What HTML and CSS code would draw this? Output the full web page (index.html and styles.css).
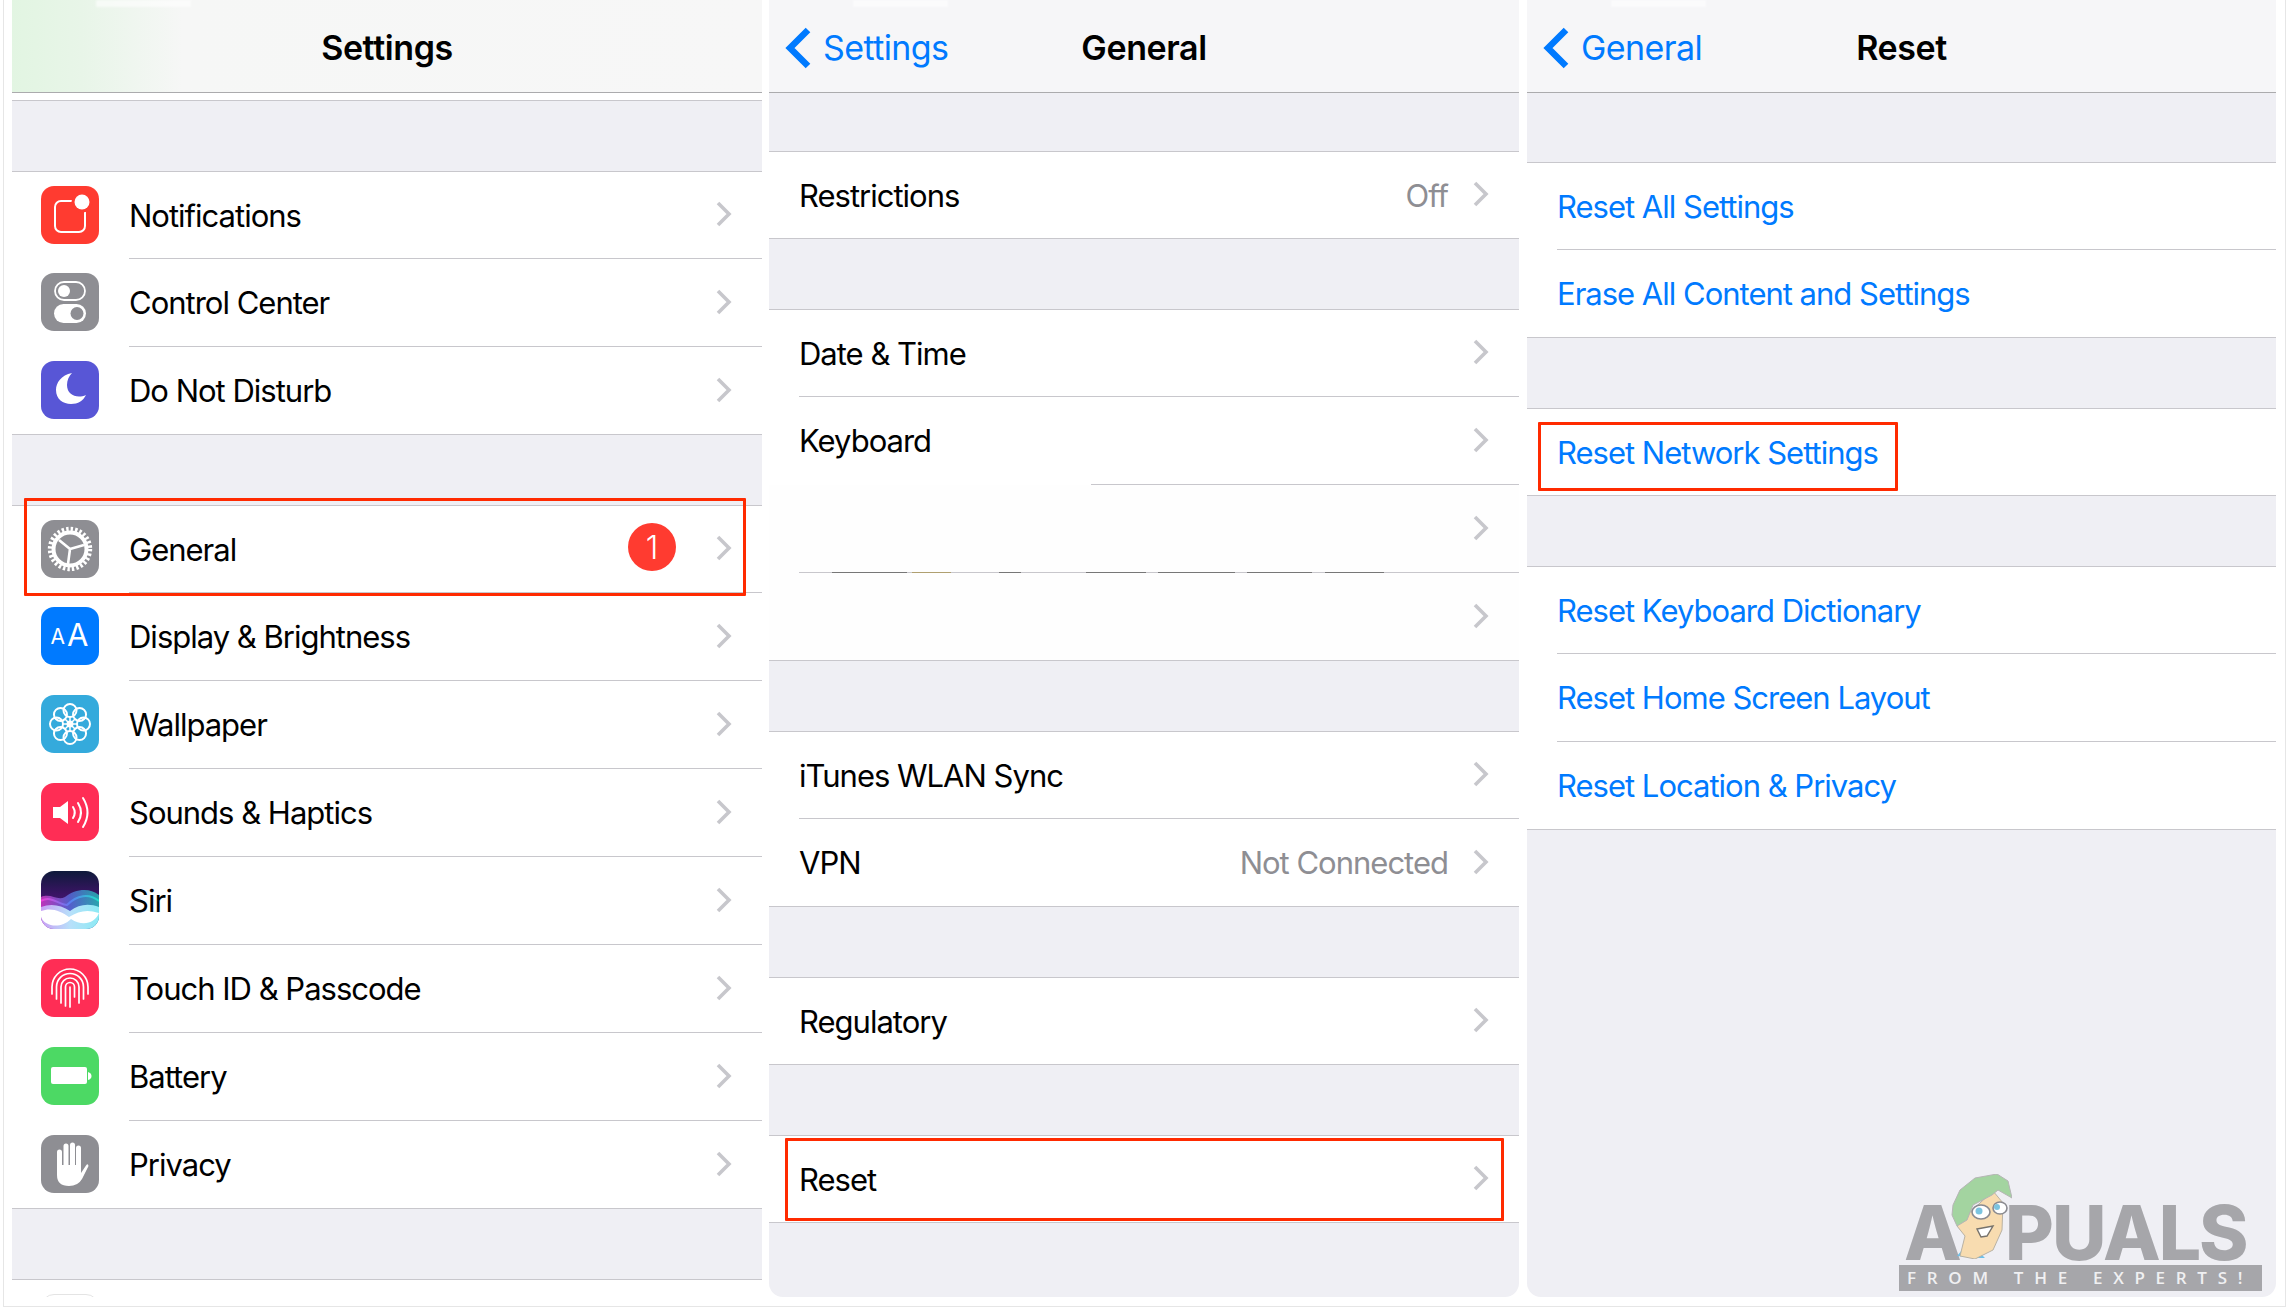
FILE: index.html
```html
<!DOCTYPE html>
<html lang="en">
<head>
    <meta charset="UTF-8">
    <title>iOS Reset Network Settings</title>
    <link rel="stylesheet" href="styles.css">
</head>
<body>
    <div class="frame">

        <!-- Settings -->
        <section class="panel">
            <header class="navbar navbar-green">
                <div class="nav-left"></div>
                <h1 class="nav-title">Settings</h1>
                <div class="nav-right"></div>
            </header>
            <div class="strip"></div>
            <div class="gap"></div>
            <div class="group">
                <div class="row">
                    <svg class="icon" viewBox="0 0 58 58"><rect width="58" height="58" fill="#ff3b30"/><rect x="14" y="15" width="30" height="31" rx="6" fill="none" stroke="#fff" stroke-width="2"/><circle cx="41" cy="16" r="10.5" fill="#ff3b30"/><circle cx="41" cy="16" r="7.5" fill="#fff"/></svg>
                    <div class="row-body"><span class="label">Notifications</span><svg class="chev" viewBox="0 0 16 26"><path d="M2 2l11 11L2 24"/></svg></div>
                </div>
                <div class="row">
                    <svg class="icon" viewBox="0 0 58 58"><rect width="58" height="58" fill="#8e8e93"/><rect x="14" y="9" width="30" height="18" rx="9" fill="none" stroke="#fff" stroke-width="1.8"/><circle cx="23" cy="18" r="6" fill="#fff"/><rect x="13" y="31" width="32" height="19" rx="9.5" fill="#fff"/><circle cx="36" cy="40.5" r="6.5" fill="#8e8e93"/></svg>
                    <div class="row-body"><span class="label">Control Center</span><svg class="chev" viewBox="0 0 16 26"><path d="M2 2l11 11L2 24"/></svg></div>
                </div>
                <div class="row">
                    <svg class="icon" viewBox="0 0 58 58"><rect width="58" height="58" fill="#5856d6"/><path d="M31 12C20 14 15 22 15 29c0 9 7 14 15 14 7 0 12-3 15-9-9 4-19 0-19-10 0-5 2-9 5-12z" fill="#fff"/></svg>
                    <div class="row-body"><span class="label">Do Not Disturb</span><svg class="chev" viewBox="0 0 16 26"><path d="M2 2l11 11L2 24"/></svg></div>
                </div>
            </div>
            <div class="gap"></div>
            <div class="group">
                <div class="row">
                    <svg class="icon" viewBox="0 0 58 58"><rect width="58" height="58" fill="#8e8e93"/><circle cx="29" cy="29" r="20" fill="none" stroke="#fff" stroke-width="4.4" stroke-dasharray="2.4 2.09"/><circle cx="29" cy="29" r="16.5" fill="none" stroke="#fff" stroke-width="4"/><path d="M29 29L18 20M29 29L43 25M29 29L27 44" stroke="#fff" stroke-width="2.6" fill="none"/></svg>
                    <div class="row-body"><span class="label">General</span><span class="badge">1</span><svg class="chev" viewBox="0 0 16 26"><path d="M2 2l11 11L2 24"/></svg></div>
                    <div class="mark mark-general"></div>
                </div>
                <div class="row">
                    <svg class="icon" viewBox="0 0 58 58"><rect width="58" height="58" fill="#007aff"/><text class="icon-aa" x="9.500" y="37" font-size="21">A</text><text class="icon-aa" x="26" y="39" font-size="31">A</text></svg>
                    <div class="row-body"><span class="label">Display &amp; Brightness</span><svg class="chev" viewBox="0 0 16 26"><path d="M2 2l11 11L2 24"/></svg></div>
                </div>
                <div class="row">
                    <svg class="icon" viewBox="0 0 58 58"><rect width="58" height="58" fill="#34aadc"/><g fill="none" stroke="#fff" stroke-width="2"><circle cx="29" cy="15.500" r="6.500"/><circle cx="29" cy="15.500" r="6.500" transform="rotate(45 29 29)"/><circle cx="29" cy="15.500" r="6.500" transform="rotate(90 29 29)"/><circle cx="29" cy="15.500" r="6.500" transform="rotate(135 29 29)"/><circle cx="29" cy="15.500" r="6.500" transform="rotate(180 29 29)"/><circle cx="29" cy="15.500" r="6.500" transform="rotate(225 29 29)"/><circle cx="29" cy="15.500" r="6.500" transform="rotate(270 29 29)"/><circle cx="29" cy="15.500" r="6.500" transform="rotate(315 29 29)"/><path d="M29 22V36M22 29H36M24 24L34 34M34 24L24 34" stroke-width="1.500"/></g><circle cx="29" cy="29" r="3.500" fill="#fff"/></svg>
                    <div class="row-body"><span class="label">Wallpaper</span><svg class="chev" viewBox="0 0 16 26"><path d="M2 2l11 11L2 24"/></svg></div>
                </div>
                <div class="row">
                    <svg class="icon" viewBox="0 0 58 58"><rect width="58" height="58" fill="#ff2d55"/><path d="M12 24h7l8-6v23l-8-6h-7z" fill="#fff"/><path d="M32 24q3.500 5.500 0 11M37 20q6 9.500 0 19M42 15q9 14.500 0 29" fill="none" stroke="#fff" stroke-width="2" stroke-linecap="round"/></svg>
                    <div class="row-body"><span class="label">Sounds &amp; Haptics</span><svg class="chev" viewBox="0 0 16 26"><path d="M2 2l11 11L2 24"/></svg></div>
                </div>
                <div class="row">
                    <svg class="icon" viewBox="0 0 58 58">
                        <defs>
                            <linearGradient id="siriBg" x1="0" y1="0" x2="0" y2="1"><stop offset="0" stop-color="#0e1a3a"/><stop offset=".4" stop-color="#3a1464"/><stop offset="1" stop-color="#5a2a9a"/></linearGradient>
                            <linearGradient id="siriWave" x1="0" y1="0" x2="1" y2="0"><stop offset="0" stop-color="#f040d8"/><stop offset=".5" stop-color="#5a7cf0"/><stop offset="1" stop-color="#20e0c8"/></linearGradient>
                            <linearGradient id="siriLow" x1="0" y1="0" x2="1" y2="0"><stop offset="0" stop-color="#c8a0f4"/><stop offset=".5" stop-color="#b8e0fa"/><stop offset="1" stop-color="#8ceaf4"/></linearGradient>
                        </defs>
                        <rect width="58" height="58" fill="url(#siriBg)"/>
                        <path d="M0 26C10 22 16 30 24 26 34 18 48 16 58 24V58H0z" fill="url(#siriWave)" opacity=".7"/>
                        <path d="M0 30C10 24 18 34 26 34 36 24 48 22 58 30" fill="none" stroke="url(#siriWave)" stroke-width="2"/>
                        <path d="M0 36C10 32 20 34 29 40 38 33 48 32 58 36V58H0z" fill="url(#siriLow)"/>
                        <path d="M0 40C10 36 20 40 28 46 38 40 46 38 58 42 54 52 42 56 30 48 20 58 4 56 0 46z" fill="#fff"/>
                    </svg>
                    <div class="row-body"><span class="label">Siri</span><svg class="chev" viewBox="0 0 16 26"><path d="M2 2l11 11L2 24"/></svg></div>
                </div>
                <div class="row">
                    <svg class="icon" viewBox="0 0 58 58"><rect width="58" height="58" fill="#ff2d55"/><path d="M11 35V28A18 18 0 0 1 47 28V35M15.500 40V28A13.500 13.500 0 0 1 42.500 28V40M20 44V28A9 9 0 0 1 38 28V44M24.500 47V28A4.500 4.500 0 0 1 33.500 28V38M29 28V48" fill="none" stroke="#fff" stroke-width="1.700" stroke-linecap="round"/></svg>
                    <div class="row-body"><span class="label">Touch ID &amp; Passcode</span><svg class="chev" viewBox="0 0 16 26"><path d="M2 2l11 11L2 24"/></svg></div>
                </div>
                <div class="row">
                    <svg class="icon" viewBox="0 0 58 58"><rect width="58" height="58" fill="#4cd964"/><rect x="10" y="20" width="36" height="17" rx="2" fill="#fff"/><path d="M47 25q3.500 1 3.500 4t-3.500 4z" fill="#fff"/></svg>
                    <div class="row-body"><span class="label">Battery</span><svg class="chev" viewBox="0 0 16 26"><path d="M2 2l11 11L2 24"/></svg></div>
                </div>
                <div class="row">
                    <svg class="icon" viewBox="0 0 58 58"><rect width="58" height="58" fill="#8e8e93"/><path d="M18.500 17V36M25 11V32M31.500 10V32M37.500 13V34" stroke="#fff" stroke-width="5" stroke-linecap="round" fill="none"/><path d="M16 30H40V38L45 30.500Q47 28 47.500 31L41 44Q37 51 28 51 16 51 16 40z" fill="#fff"/></svg>
                    <div class="row-body"><span class="label">Privacy</span><svg class="chev" viewBox="0 0 16 26"><path d="M2 2l11 11L2 24"/></svg></div>
                </div>
            </div>
            <div class="gap"></div>
            <div class="group group-open">
                <div class="row">
                    <div class="icon icon-clipped"></div>
                </div>
            </div>
        </section>

        <!-- General -->
        <section class="panel panel-gray">
            <header class="navbar">
                <a class="back"><svg class="back-chev" viewBox="0 0 26 42"><path d="M23 3L5 21l18 18"/></svg>Settings</a>
                <h1 class="nav-title">General</h1>
                <div class="nav-right"></div>
            </header>
            <div class="gap gap-first"></div>
            <div class="group">
                <div class="row row-plain">
                    <div class="row-body"><span class="label">Restrictions</span><span class="value">Off</span><svg class="chev" viewBox="0 0 16 26"><path d="M2 2l11 11L2 24"/></svg></div>
                </div>
            </div>
            <div class="gap"></div>
            <div class="group">
                <div class="row row-plain">
                    <div class="row-body"><span class="label">Date &amp; Time</span><svg class="chev" viewBox="0 0 16 26"><path d="M2 2l11 11L2 24"/></svg></div>
                </div>
                <div class="row row-plain">
                    <div class="row-body"><span class="label">Keyboard</span><svg class="chev" viewBox="0 0 16 26"><path d="M2 2l11 11L2 24"/></svg></div>
                    <div class="line-patch"></div>
                </div>
                <div class="row row-plain row-blurred">
                    <div class="row-body"><span class="label"></span><svg class="chev" viewBox="0 0 16 26"><path d="M2 2l11 11L2 24"/></svg></div>
                    <div class="line-dashes"></div>
                </div>
                <div class="row row-plain row-blurred">
                    <div class="row-body"><span class="label"></span><svg class="chev" viewBox="0 0 16 26"><path d="M2 2l11 11L2 24"/></svg></div>
                </div>
            </div>
            <div class="gap"></div>
            <div class="group">
                <div class="row row-plain">
                    <div class="row-body"><span class="label">iTunes WLAN Sync</span><svg class="chev" viewBox="0 0 16 26"><path d="M2 2l11 11L2 24"/></svg></div>
                </div>
                <div class="row row-plain">
                    <div class="row-body"><span class="label">VPN</span><span class="value">Not Connected</span><svg class="chev" viewBox="0 0 16 26"><path d="M2 2l11 11L2 24"/></svg></div>
                </div>
            </div>
            <div class="gap"></div>
            <div class="group">
                <div class="row row-plain">
                    <div class="row-body"><span class="label">Regulatory</span><svg class="chev" viewBox="0 0 16 26"><path d="M2 2l11 11L2 24"/></svg></div>
                </div>
            </div>
            <div class="gap"></div>
            <div class="group">
                <div class="row row-plain">
                    <div class="row-body"><span class="label">Reset</span><svg class="chev" viewBox="0 0 16 26"><path d="M2 2l11 11L2 24"/></svg></div>
                    <div class="mark mark-reset"></div>
                </div>
            </div>
        </section>

        <!-- Reset -->
        <section class="panel panel-gray">
            <header class="navbar">
                <a class="back"><svg class="back-chev" viewBox="0 0 26 42"><path d="M23 3L5 21l18 18"/></svg>General</a>
                <h1 class="nav-title">Reset</h1>
                <div class="nav-right"></div>
            </header>
            <div class="gap gap-reset"></div>
            <div class="group">
                <div class="row row-plain"><div class="row-body"><span class="label link">Reset All Settings</span></div></div>
                <div class="row row-plain"><div class="row-body"><span class="label link">Erase All Content and Settings</span></div></div>
            </div>
            <div class="gap"></div>
            <div class="group">
                <div class="row row-plain">
                    <div class="row-body"><span class="label link">Reset Network Settings</span></div>
                    <div class="mark mark-network"></div>
                </div>
            </div>
            <div class="gap"></div>
            <div class="group">
                <div class="row row-plain"><div class="row-body"><span class="label link">Reset Keyboard Dictionary</span></div></div>
                <div class="row row-plain"><div class="row-body"><span class="label link">Reset Home Screen Layout</span></div></div>
                <div class="row row-plain"><div class="row-body"><span class="label link">Reset Location &amp; Privacy</span></div></div>
            </div>

            <div class="watermark">
                <div class="wm-word">
                    <span class="wm-a">A</span>
                    <svg class="wm-face" viewBox="0 0 62 85">
                        <path d="M7 82l5-6 6 7zM25 84l4-6 6 6z" fill="#6cc0ea"/>
                        <path d="M17 41L43 17l10 12-1 27-9 20-18 9-15-3 5-20-8-10z" fill="#f8dcb0" stroke="#b9b2a4"/>
                        <path d="M3 31L10 16 25 4 47 0l11 7 4 17-14-8-6 5-19 10-6 15-10 6-5-11z" fill="#a3d4a0" stroke="#b5b5b5"/>
                        <ellipse cx="31" cy="38" rx="9" ry="7" fill="#fff" stroke="#8a8a90" stroke-width="1.600"/>
                        <ellipse cx="50" cy="34" rx="7" ry="6" fill="#fff" stroke="#8a8a90" stroke-width="1.600"/>
                        <circle cx="29" cy="37" r="3.500" fill="#7cc4e0"/>
                        <circle cx="47" cy="33" r="3" fill="#7cc4e0"/>
                        <path d="M27 55l16-3-6 10-6 1z" fill="#fff" stroke="#77736c" stroke-width="1.400"/>
                    </svg>
                    <span class="wm-rest">PUALS</span>
                </div>
                <div class="wm-banner">FROM THE EXPERTS!</div>
            </div>
        </section>

    </div>
</body>
</html>
```

FILE: styles.css
```css
html, body {
    margin: 0;
    padding: 0;
    background: #fff;
}

body {
    font-family: 'Inter', 'Liberation Sans', sans-serif;
    color: #000;
}

.frame {
    display: flex;
    align-items: flex-start;
    box-sizing: border-box;
    width: 2283px;
    height: 1307px;
    margin-left: 3px;
    padding-left: 8px;
    border: 1px solid #e6e6e6;
    border-top: none;
}

.panel {
    position: relative;
    width: 750px;
    height: 1297px;
    overflow: hidden;
    background: #fff;
    margin-right: 7px;
}

.panel:last-child {
    width: 749px;
    margin-left: 1px;
    margin-right: 0;
}

.panel-gray {
    background: #efeff4;
    border-radius: 0 0 14px 14px;
}

/* nav bar */
.navbar {
    position: relative;
    display: grid;
    grid-template-columns: 1fr auto 1fr;
    align-items: center;
    box-sizing: border-box;
    height: 93px;
    padding-top: 3px;
    background: #f6f6f8;
    border-bottom: 1px solid #ababad;
}

/* leftover of the erased status bar */
.navbar::before {
    content: "";
    position: absolute;
    top: 0;
    left: 84px;
    width: 95px;
    height: 7px;
    background: rgba(255,255,255,0.6);
    filter: blur(1px);
}

.navbar-green {
    background: linear-gradient(90deg, #e2f5e2 0, #e8f5e8 70px, #f6f7f6 170px, #f7f7f7 100%);
}

.nav-title {
    margin: 0;
    font-size: 34px;
    font-weight: 600;
    letter-spacing: -0.4px;
}

.back {
    display: flex;
    align-items: center;
    gap: 12px;
    padding-left: 16px;
    font-size: 34px;
    letter-spacing: -0.6px;
    color: #007aff;
}

.back-chev {
    width: 26px;
    height: 42px;
    overflow: visible;
}

.back-chev path {
    fill: none;
    stroke: #007aff;
    stroke-width: 6.5;
}

/* list */
.strip {
    box-sizing: border-box;
    height: 8px;
    background: #fff;
    border-bottom: 1px solid #c8c7cc;
}

.gap {
    box-sizing: border-box;
    height: 71px;
    background: #efeff4;
    border-bottom: 1px solid #c8c7cc;
}

.gap-first {
    height: 59px;
}

.gap-reset {
    height: 70px;
}

.group {
    background: #fff;
}

.row {
    position: relative;
    display: flex;
    align-items: center;
    box-sizing: border-box;
    height: 88px;
    padding-left: 29px;
    background: #fff;
}

.row:first-child {
    height: 87px;
}

.row:last-child {
    border-bottom: 1px solid #c8c7cc;
}

.row-plain {
    padding-left: 30px;
}

.row-blurred {
    background: #fefefe;
}

.row-body {
    display: flex;
    align-items: center;
    flex: 1;
    box-sizing: border-box;
    height: 100%;
    padding-right: 30px;
    border-bottom: 1px solid #c8c7cc;
}

.row:last-child .row-body {
    border-bottom: none;
}

.group-open .row {
    border-bottom: none;
}

.icon {
    flex: none;
    width: 58px;
    height: 58px;
    margin-right: 30px;
    margin-bottom: 2px;
    border-radius: 13px;
}

.icon-aa {
    font-family: 'Inter', sans-serif;
    fill: #fff;
}

.icon-clipped {
    box-sizing: border-box;
    border: 1px solid #e4e4e4;
}

.label {
    flex: 1;
    font-size: 31px;
    letter-spacing: -1px;
}

.link {
    color: #007aff;
}

.value {
    margin-right: 25px;
    font-size: 31px;
    letter-spacing: -1px;
    color: #8e8e93;
}

.chev {
    flex: none;
    width: 16px;
    height: 26px;
    margin-bottom: 2px;
}

.chev path {
    fill: none;
    stroke: #c7c7cc;
    stroke-width: 3.6;
}

.badge {
    display: flex;
    align-items: center;
    justify-content: center;
    width: 48px;
    height: 48px;
    margin-right: 40px;
    margin-bottom: 4px;
    border-radius: 50%;
    background: #ff3b30;
    color: #fff;
    font-size: 32px;
    font-weight: 300;
}

/* red annotations */
.mark {
    position: absolute;
    z-index: 2;
    box-sizing: border-box;
    border: 3px solid #ff2a00;
    border-radius: 1px;
}

.mark-general {
    top: -8px;
    bottom: -3px;
    left: 12px;
    right: 16px;
}

.mark-reset {
    top: 2px;
    bottom: 1px;
    left: 16px;
    right: 15px;
}

.mark-network {
    top: 13px;
    bottom: 4px;
    left: 11px;
    width: 360px;
}

/* scrubbed part of the General list */
.line-patch {
    position: absolute;
    left: 0;
    bottom: 0;
    width: 322px;
    height: 1px;
    background: #fff;
}

.line-dashes {
    position: absolute;
    left: 0;
    bottom: 0;
    width: 620px;
    height: 1px;
    background: linear-gradient(90deg,
        transparent 63px, #777 63px, #777 138px, transparent 138px,
        transparent 143px, #b0a070 143px, #b0a070 182px, transparent 182px,
        transparent 230px, #777 230px, #777 252px, transparent 252px,
        transparent 317px, #777 317px, #777 377px, transparent 377px,
        transparent 389px, #777 389px, #777 466px, transparent 466px,
        transparent 478px, #777 478px, #777 543px, transparent 543px,
        transparent 556px, #777 556px, #777 615px, transparent 615px);
}

/* watermark */
.watermark {
    position: absolute;
    top: 1174px;
    left: 372px;
    width: 363px;
}

.wm-word {
    display: flex;
    align-items: flex-end;
    height: 90px;
    color: #a6a6aa;
    font-family: 'Inter', sans-serif;
    font-size: 75px;
    font-weight: 800;
    line-height: 56px;
}

.wm-a {
    flex: none;
    width: 47px;
    margin-left: 5px;
    margin-bottom: 3px;
}

.wm-face {
    flex: none;
    width: 62px;
    height: 85px;
    margin-left: -1px;
    margin-bottom: 5px;
}

.wm-rest {
    margin-left: -7px;
    margin-bottom: 3px;
    letter-spacing: -2px;
}

.wm-banner {
    box-sizing: border-box;
    height: 26px;
    margin-top: 1px;
    padding-left: 8px;
    background: #a6a6aa;
    color: #f0f0f2;
    font-family: 'Open Sans', sans-serif;
    font-size: 17px;
    font-weight: 600;
    line-height: 26px;
    letter-spacing: 10.7px;
    white-space: nowrap;
    overflow: hidden;
}
```
